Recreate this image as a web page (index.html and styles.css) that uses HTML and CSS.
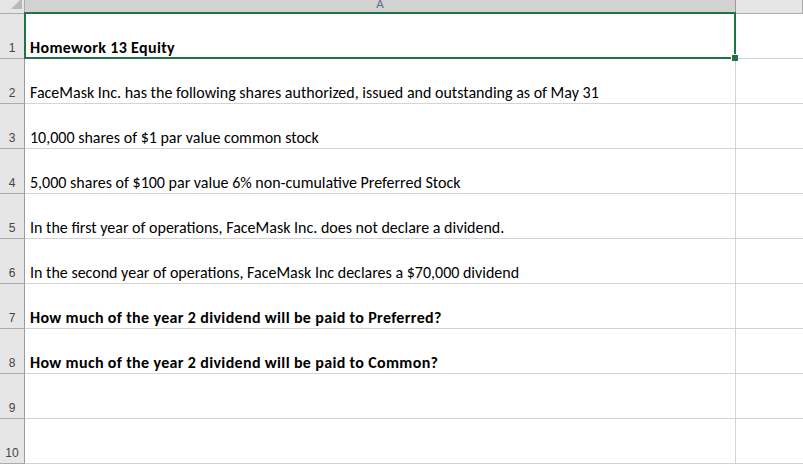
FILE: index.html
```html
<!DOCTYPE html>
<html>
<head>
<meta charset="utf-8">
<link rel="stylesheet" href="styles.css">
</head>
<body>
<div class="sheet">
  <div class="corner"><div class="tri"></div></div>
  <div class="colhead sel">A</div>
  <div class="colhead"></div>

  <div class="rowhead">1</div>
  <div class="cell bold">Homework 13 Equity</div>
  <div class="cell rest"></div>

  <div class="rowhead">2</div>
  <div class="cell">FaceMask Inc. has the following shares authorized, issued and outstanding as of May 31</div>
  <div class="cell rest"></div>

  <div class="rowhead">3</div>
  <div class="cell">10,000 shares of $1 par value common stock</div>
  <div class="cell rest"></div>

  <div class="rowhead">4</div>
  <div class="cell">5,000 shares of $100 par value 6% non-cumulative Preferred Stock</div>
  <div class="cell rest"></div>

  <div class="rowhead">5</div>
  <div class="cell">In the first year of operations, FaceMask Inc. does not declare a dividend.</div>
  <div class="cell rest"></div>

  <div class="rowhead">6</div>
  <div class="cell">In the second year of operations, FaceMask Inc declares a $70,000 dividend</div>
  <div class="cell rest"></div>

  <div class="rowhead">7</div>
  <div class="cell bold">How much of the year 2 dividend will be paid to Preferred?</div>
  <div class="cell rest"></div>

  <div class="rowhead">8</div>
  <div class="cell bold">How much of the year 2 dividend will be paid to Common?</div>
  <div class="cell rest"></div>

  <div class="rowhead">9</div>
  <div class="cell"></div>
  <div class="cell rest"></div>

  <div class="rowhead">10</div>
  <div class="cell"></div>
  <div class="cell rest"></div>

  <div class="selection"><div class="handle"></div></div>
</div>
</body>
</html>
```

FILE: styles.css
```css
html, body {
  margin: 0;
  padding: 0;
  background: #ffffff;
  overflow: hidden;
}
.sheet {
  position: relative;
  display: grid;
  grid-template-columns: 25px 711px 1fr;
  grid-template-rows: 14px repeat(10, 45px);
  width: 803px;
  height: 464px;
  font-family: Carlito, Lato, "Liberation Sans", sans-serif;
}
.corner {
  background: #e6e6e6;
  border-right: 1px solid #ababab;
  border-bottom: 1px solid #ababab;
  box-sizing: border-box;
  position: relative;
  overflow: hidden;
}
.tri {
  position: absolute;
  right: 2px;
  bottom: 4px;
  width: 0;
  height: 0;
  border-left: 11px solid transparent;
  border-bottom: 11px solid #b9b9b9;
}
.colhead {
  background: #e6e6e6;
  border-right: 1px solid #ababab;
  border-bottom: 1px solid #ababab;
  box-sizing: border-box;
  color: #5b6e84;
  font-size: 13px;
  line-height: 13px;
  text-align: center;
  overflow: hidden;
  display: flex;
  align-items: flex-end;
  justify-content: center;
  padding-bottom: 3px;
}
.colhead.sel {
  background: #d2d2d2;
  border-right-color: #9b9b9b;
}
.rowhead {
  background: #e6e6e6;
  border-right: 1px solid #9b9b9b;
  border-bottom: 1px solid #ababab;
  box-sizing: border-box;
  color: #444444;
  font-size: 12px;
  display: flex;
  align-items: flex-end;
  justify-content: center;
  padding-bottom: 3px;
  font-family: "Liberation Sans", Arial, sans-serif;
}
.cell {
  border-right: 1px solid #d4d4d4;
  border-bottom: 1px solid #d4d4d4;
  box-sizing: border-box;
  font-size: 16px;
  color: #000000;
  display: flex;
  align-items: flex-end;
  padding: 0 0 1px 5px;
  white-space: nowrap;
  overflow: visible;
}
.cell.rest {
  border-right: none;
}
.bold {
  font-weight: bold;
  letter-spacing: 0.35px;
}
.selection {
  position: absolute;
  left: 24px;
  top: 12px;
  width: 712px;
  height: 47px;
  border: 2px solid #217346;
  box-sizing: border-box;
}
.handle {
  position: absolute;
  right: -4px;
  bottom: -4px;
  width: 6px;
  height: 6px;
  background: #217346;
  border: 1px solid #ffffff;
  border-right: none;
  border-bottom: none;
}
```
